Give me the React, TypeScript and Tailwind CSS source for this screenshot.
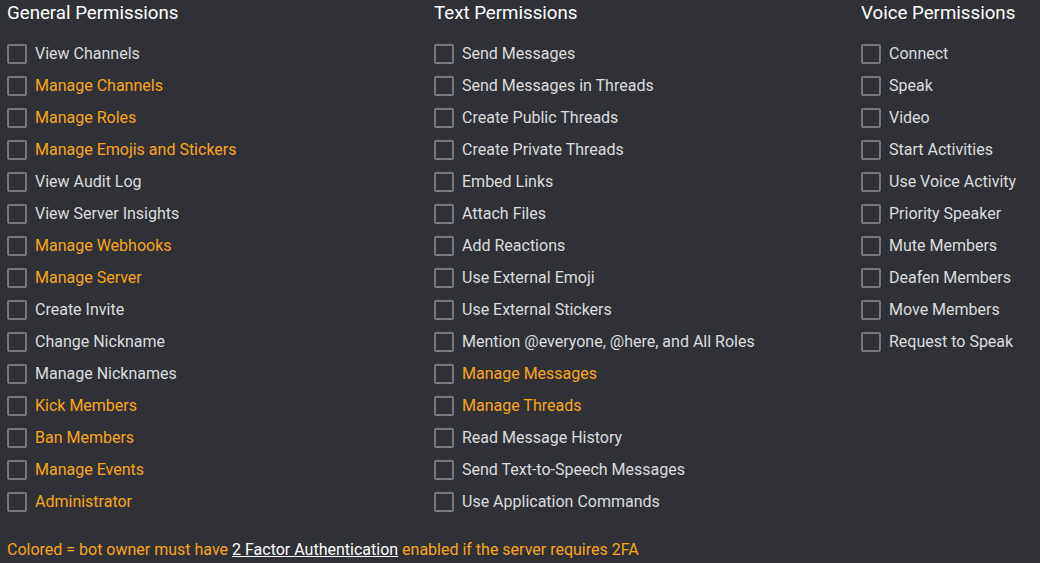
import React from "react";

type P = [string, boolean];

const general: P[] = [
  ["View Channels", false],
  ["Manage Channels", true],
  ["Manage Roles", true],
  ["Manage Emojis and Stickers", true],
  ["View Audit Log", false],
  ["View Server Insights", false],
  ["Manage Webhooks", true],
  ["Manage Server", true],
  ["Create Invite", false],
  ["Change Nickname", false],
  ["Manage Nicknames", false],
  ["Kick Members", true],
  ["Ban Members", true],
  ["Manage Events", true],
  ["Administrator", true],
];

const text: P[] = [
  ["Send Messages", false],
  ["Send Messages in Threads", false],
  ["Create Public Threads", false],
  ["Create Private Threads", false],
  ["Embed Links", false],
  ["Attach Files", false],
  ["Add Reactions", false],
  ["Use External Emoji", false],
  ["Use External Stickers", false],
  ["Mention @everyone, @here, and All Roles", false],
  ["Manage Messages", true],
  ["Manage Threads", true],
  ["Read Message History", false],
  ["Send Text-to-Speech Messages", false],
  ["Use Application Commands", false],
];

const voice: P[] = [
  ["Connect", false],
  ["Speak", false],
  ["Video", false],
  ["Start Activities", false],
  ["Use Voice Activity", false],
  ["Priority Speaker", false],
  ["Mute Members", false],
  ["Deafen Members", false],
  ["Move Members", false],
  ["Request to Speak", false],
];

function Column({ title, items }: { title: string; items: P[] }) {
  return (
    <div className="flex flex-col">
      <h2 className="text-[18.7px] leading-[27px] text-white font-normal mb-[11px]">{title}</h2>
      <div className="flex flex-col">
        {items.map(([name, colored]) => (
          <label key={name} className="flex items-center h-[32px] gap-[8px]">
            <span className="w-[20px] h-[20px] border-2 border-[#76777b] rounded-[2px] shrink-0" />
            <span
              className={
                "text-[16px] leading-[20px] whitespace-nowrap " +
                (colored ? "text-[#faa61a]" : "text-[#dcddde]")
              }
            >
              {name}
            </span>
          </label>
        ))}
      </div>
    </div>
  );
}

export default function App() {
  return (
    <div
      className="w-[1040px] h-[563px] overflow-hidden bg-[#2f3136] pl-[7px]"
      style={{ fontFamily: "Roboto, 'Liberation Sans', sans-serif" }}
    >
      <div className="grid grid-cols-[427px_427px_1fr]">
        <Column title="General Permissions" items={general} />
        <Column title="Text Permissions" items={text} />
        <Column title="Voice Permissions" items={voice} />
      </div>
      <p className="mt-[20px] text-[16px] leading-[24px] text-[#faa61a]">
        Colored = bot owner must have{" "}
        <a className="text-white underline">2 Factor Authentication</a> enabled if the server requires 2FA
      </p>
    </div>
  );
}
